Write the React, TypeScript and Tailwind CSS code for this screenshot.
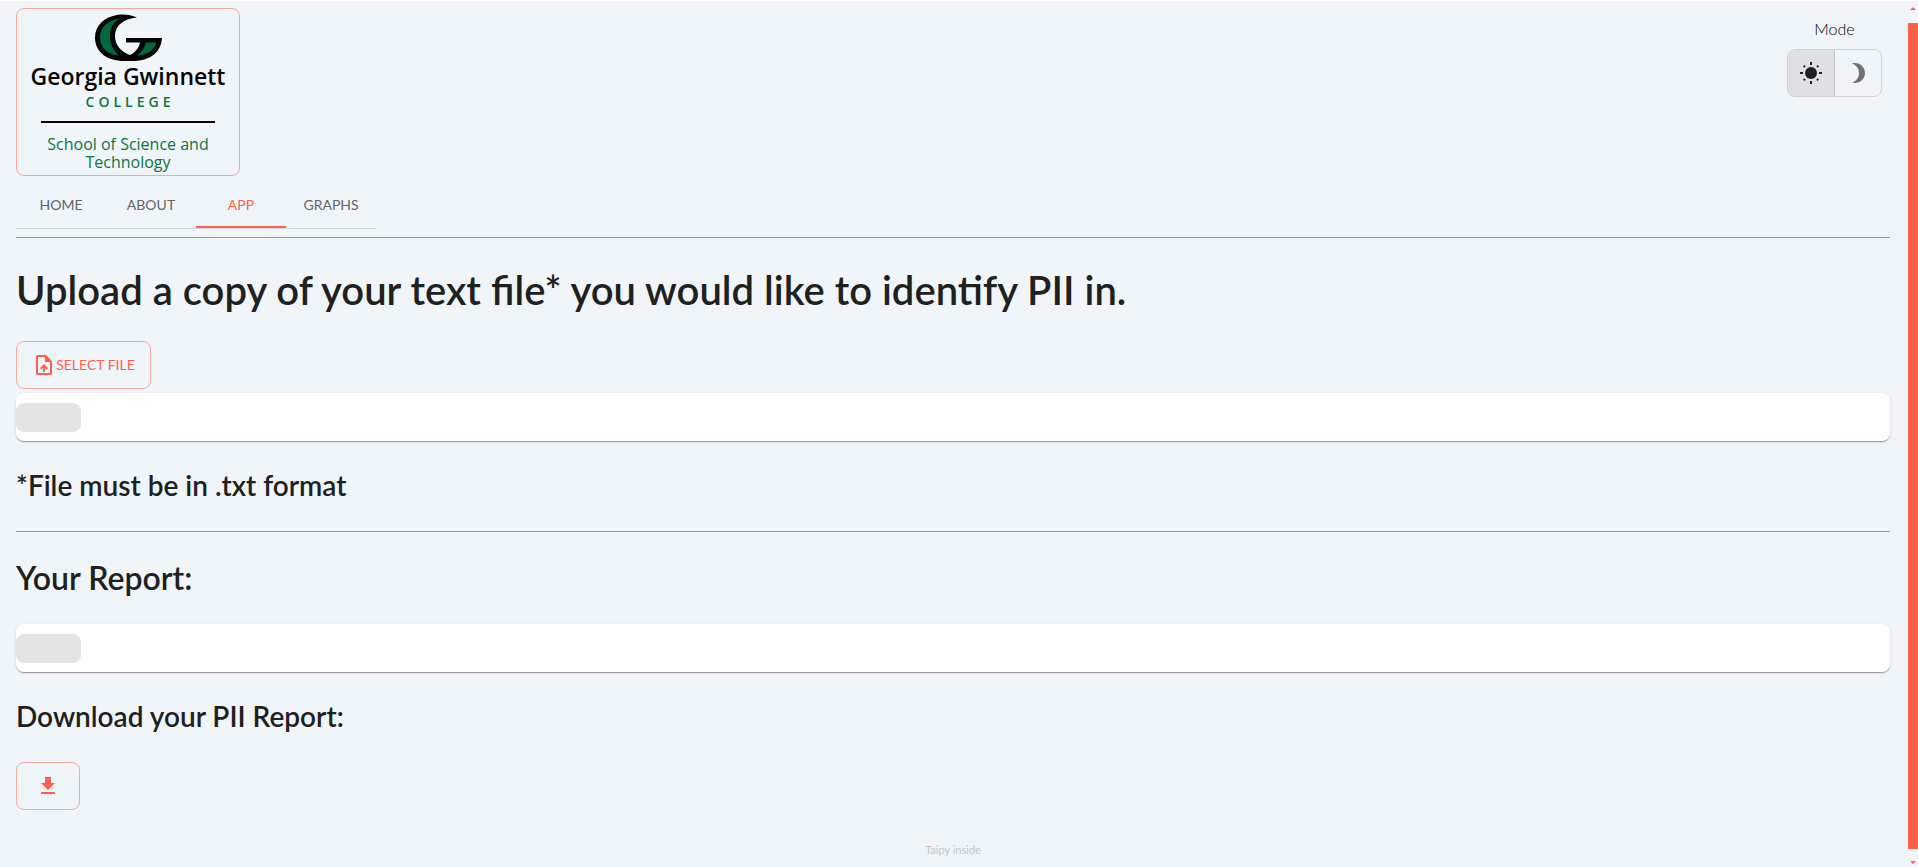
import React from "react";

const tabs = ["Home", "About", "App", "Graphs"];

function CollegeMark() {
  return (
    <svg width="67" height="48" viewBox="0 0 67 48" aria-hidden="true">
      <path
        d="M42 3.500C36 .5 29 0 23 .8C9 3 0 12 0 23.500C0 38 12 47 29 47H40C56 46 66 38 67 24H31V28.500H45C44 34 40 39 35 41C26 38 20 31 20 22C20 12 28 4.500 42 3.500Z"
        fill="#050505"
      />
      <path
        d="M25 4.500C13 6 5 13 5 23.500C5 33 11 40 24 41.500C18 36 15 30 15 22C15 14 18 8 25 4.500Z"
        fill="#00693e"
      />
      <path d="M50.500 28.500H61.500C59 36 52 41.500 42 41.500C47 38 50 34 50.500 28.500Z" fill="#00693e" />
    </svg>
  );
}

function Logo() {
  return (
    <div className="flex h-[168px] w-56 flex-col items-center rounded-lg border border-[#f8a99f] pt-[5px] font-['Open_Sans',sans-serif] text-[#0b7544]">
      <CollegeMark />
      <p className="text-[23px] leading-7 font-semibold text-[#050505]">Georgia Gwinnett</p>
      <p className="mt-1 pl-1 text-sm leading-4 font-semibold tracking-[4px]">COLLEGE</p>
      <div className="mt-[11px] h-[2px] w-[174px] shrink-0 bg-[#050505]" />
      <p className="mt-3 w-[180px] text-center text-base leading-[18px]">School of Science and Technology</p>
    </div>
  );
}

function FieldCard({ label }: { label: string }) {
  return (
    <div
      role="status"
      aria-label={label}
      className="flex h-12 items-center rounded-lg bg-white shadow-[0px_2px_1px_-1px_rgba(0,0,0,0.2),0px_1px_1px_0px_rgba(0,0,0,0.14),0px_1px_3px_0px_rgba(0,0,0,0.12)]"
    >
      <div className="mt-px h-[29px] w-[65px] rounded-lg bg-[#e4e4e4]" />
    </div>
  );
}

function ModeToggle() {
  return (
    <div className="flex w-[95px] flex-col items-center text-[#1f2121]">
      <span id="mode-label" className="text-base leading-6 font-light text-black">Mode</span>
      <div role="group" aria-labelledby="mode-label" className="mt-2 flex h-12 w-full overflow-hidden rounded-lg border border-[#cfd3d6]">
        <button type="button" aria-label="Light" aria-pressed="true" className="flex flex-1 items-center justify-center border-r border-[#c3c7ca] bg-[#dde1e4]">
          <svg width="24" height="24" viewBox="0 0 24 24" fill="#1f2121" aria-hidden="true">
            <circle cx="12" cy="12" r="6" />
            <path d="M11 1h2v3h-2zM11 20h2v3h-2zM1 11h3v2H1zM20 11h3v2h-3zM4 5.400L5.400 4l1.300 1.300L5.300 6.700zM17.300 5.300L18.600 4 20 5.400l-1.300 1.300zM4 18.600l1.300-1.300 1.400 1.400L5.400 20zM17.300 18.700l1.400-1.400 1.300 1.300-1.400 1.400z" />
          </svg>
        </button>
        <button type="button" aria-label="Dark" aria-pressed="false" className="flex flex-1 items-center justify-center">
          <svg width="24" height="24" viewBox="0 0 24 24" fill="#6f7273" aria-hidden="true">
            <path d="M9 2c-1.050 0-2.050.16-3 .46 4.060 1.270 7 5.060 7 9.540s-2.940 8.270-7 9.540c.95.3 1.950.46 3 .46 5.520 0 10-4.480 10-10S14.520 2 9 2z" />
          </svg>
        </button>
      </div>
    </div>
  );
}

export default function App() {
  return (
    <div className="flex min-h-screen border-t border-white bg-[#eff5f8] font-[Lato,sans-serif] text-[#1f2121]">
      <div className="flex min-w-0 flex-1 flex-col pr-[18px] pl-4">
        <header className="flex items-start justify-between pt-[7px] pr-2">
          <Logo />
          <div className="pt-[9px]">
            <ModeToggle />
          </div>
        </header>
        <nav className="mt-1 flex h-[49px] w-[360px] border-b border-[#cfd5d7]">
          {tabs.map((tab) => (
            <a
              key={tab}
              href={`#${tab.toLowerCase()}`}
              aria-current={tab === "App" ? "page" : undefined}
              className={
                tab === "App"
                  ? "flex flex-1 items-center justify-center border-b-2 border-[#ff6049] pt-1 text-sm text-[#ff6049] uppercase"
                  : "flex flex-1 items-center justify-center pt-[2px] text-sm text-[#626566] uppercase"
              }
            >
              {tab}
            </a>
          ))}
        </nav>
        <hr className="mt-2 border-[#949a9a]" />
        <main>
          <h1 className="mt-7 text-[40px] leading-[48px] font-semibold">
            Upload a copy of your text file* you would like to identify PII in.
          </h1>
          <button type="button" className="mt-[27px] flex h-12 w-[135px] items-center justify-center rounded-lg border border-[#f8a99f] text-sm text-[#ff6049]">
            <svg width="24" height="24" viewBox="0 0 24 24" fill="currentColor" aria-hidden="true">
              <path d="M14 2H6c-1.100 0-1.990.9-1.990 2L4 20c0 1.100.89 2 1.990 2H18c1.100 0 2-.9 2-2V8l-6-6zm4 18H6V4h7v5h5v11zM8 15.010l1.410 1.410L11 14.840V19h2v-4.160l1.590 1.590L16 15.010 12.010 11 8 15.010z" />
            </svg>
            SELECT FILE
          </button>
          <div className="mt-1">
            <FieldCard label="Selected file" />
          </div>
          <h3 className="mt-7 text-[28px] leading-8 font-semibold">*File must be in .txt format</h3>
          <hr className="mt-[30px] border-[#949a9a]" />
          <h2 className="mt-[26px] text-[32px] leading-10 font-semibold">Your Report:</h2>
          <div className="mt-[26px]">
            <FieldCard label="Report" />
          </div>
          <h3 className="mt-7 text-[28px] leading-8 font-semibold">Download your PII Report:</h3>
          <button type="button" aria-label="Download" className="mt-[30px] flex h-12 w-16 items-center justify-center rounded-lg border border-[#f8a99f] text-[#ff6049]">
            <svg width="24" height="24" viewBox="0 0 24 24" fill="currentColor" aria-hidden="true">
              <path d="M19 9h-4V3H9v6H5l7 7 7-7zM5 18v2h14v-2H5z" />
            </svg>
          </button>
        </main>
        <footer className="mt-8 text-center text-[11px] leading-4 text-[#c3c7c9]">Taipy inside</footer>
      </div>
      <div aria-hidden="true" className="flex h-[calc(100vh-1px)] w-[10px] flex-col items-center justify-between pt-[6px] pb-[3px]">
        <svg width="6" height="3" viewBox="0 0 6 3" fill="#ff6049"><path d="M0 3L3 0l3 3z" /></svg>
        <div className="mt-[13px] mb-3 w-full flex-1 bg-[#ff6049]" />
        <svg width="6" height="3" viewBox="0 0 6 3" fill="#ff6049"><path d="M0 0l3 3 3-3z" /></svg>
      </div>
    </div>
  );
}
